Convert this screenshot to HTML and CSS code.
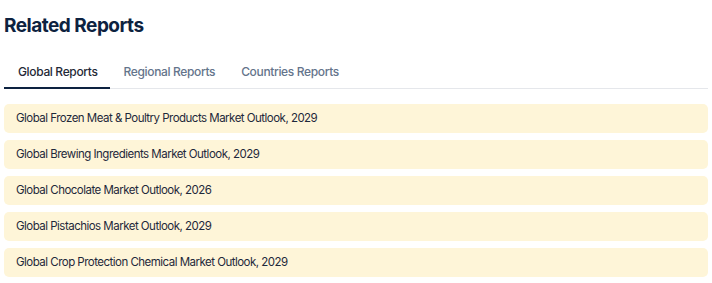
FILE: index.html
```html
<!DOCTYPE html>
<html>
<head>
<meta charset="utf-8">
<link rel="stylesheet" href="styles.css">
</head>
<body>
<section class="related">
  <h2 class="title">Related Reports</h2>
  <div class="tabs">
    <div class="tab active">Global Reports</div>
    <div class="tab">Regional Reports</div>
    <div class="tab">Countries Reports</div>
  </div>
  <ul class="list">
    <li class="item">Global Frozen Meat &amp; Poultry Products Market Outlook, 2029</li>
    <li class="item">Global Brewing Ingredients Market Outlook, 2029</li>
    <li class="item">Global Chocolate Market Outlook, 2026</li>
    <li class="item">Global Pistachios Market Outlook, 2029</li>
    <li class="item">Global Crop Protection Chemical Market Outlook, 2029</li>
  </ul>
</section>
</body>
</html>
```
FILE: styles.css
```css
html, body {
  margin: 0;
  padding: 0;
  background: #ffffff;
}
body {
  font-family: Inter, "Noto Sans", sans-serif;
}
.related {
  padding: 14px 4px 0 4px;
}
.title {
  margin: 0;
  font-size: 19px;
  line-height: 24px;
  font-weight: 700;
  letter-spacing: -0.5px;
  color: #0d2240;
}
.tabs {
  display: flex;
  align-items: flex-start;
  height: 30px;
  margin-top: 20px;
  border-bottom: 1px solid #e5e7eb;
}
.tab {
  box-sizing: border-box;
  height: 31px;
  margin-bottom: -1px;
  padding: 4px 12px 0 14px;
  font-size: 12px;
  line-height: 20px;
  letter-spacing: -0.35px;
  font-weight: 500;
  color: #64748b;
}
.tab.active {
  color: #1f2937;
  border-bottom: 2px solid #0d2240;
}
.list {
  list-style: none;
  margin: 15px 0 0 0;
  padding: 0;
  display: flex;
  flex-direction: column;
  gap: 7px;
}
.item {
  background: #fef5d8;
  border-radius: 5px;
  height: 29px;
  line-height: 29px;
  padding: 0 12px;
  font-size: 11.5px;
  letter-spacing: -0.52px;
  color: #1e293b;
}
```
